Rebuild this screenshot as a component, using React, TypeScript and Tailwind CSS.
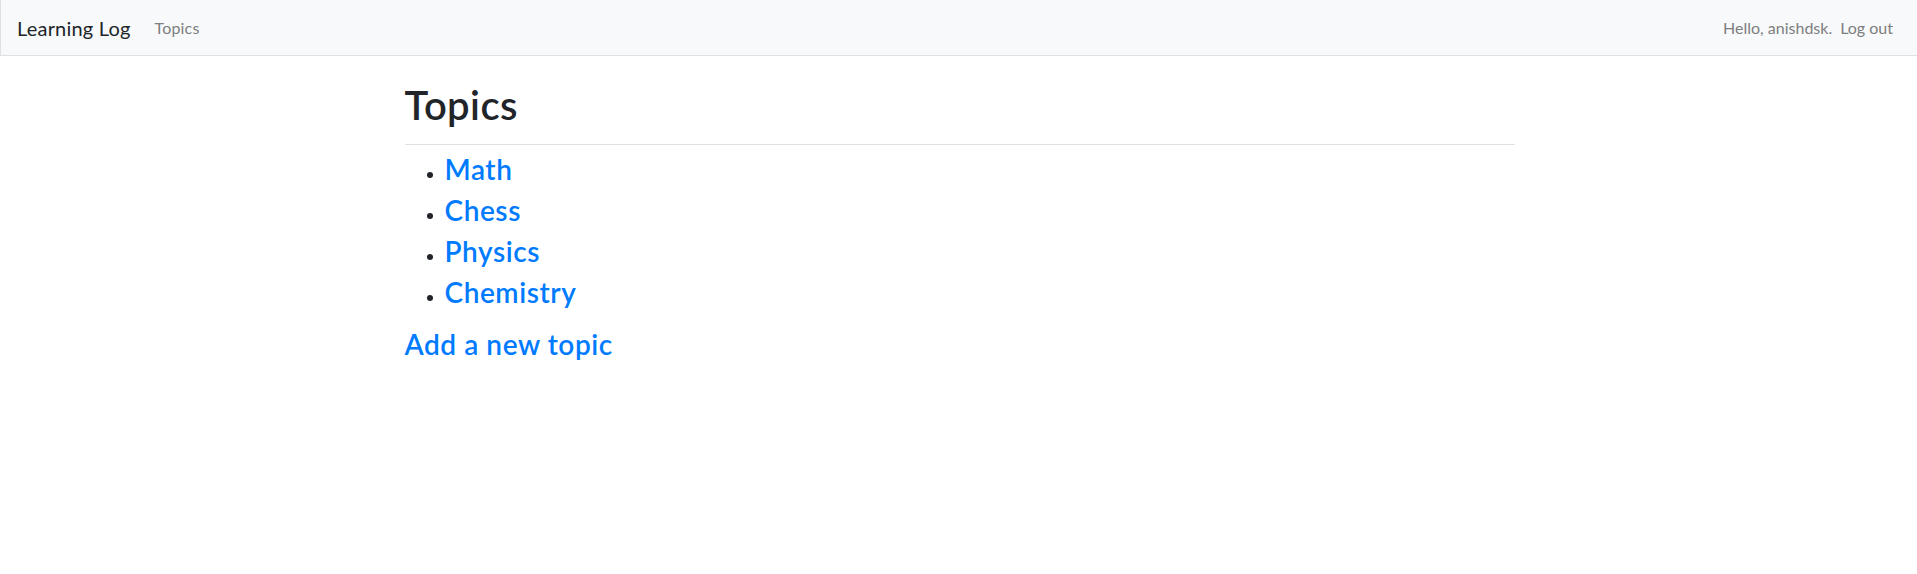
import * as React from 'react';

const topics = ['Math', 'Chess', 'Physics', 'Chemistry'];

const font = { fontFamily: 'Lato, "Noto Sans", sans-serif' };

export default function App() {
  return (
    <div className="min-h-screen bg-white text-[#212529]" style={font}>
      <nav className="flex h-[56px] items-center justify-between border-b border-l border-[#dee2e6] bg-[#f8f9fa] px-4">
        <div className="flex items-center">
          <a href="#" className="mr-4 text-[20px] leading-[30px] tracking-[0.01em] text-[#212529]">
            Learning Log
          </a>
          <a href="#" className="px-2 text-[16px] tracking-[0.01em] text-[#7d7e7f]">
            Topics
          </a>
        </div>
        <div className="flex items-center text-[16px] text-[#7d7e7f]">
          <span className="px-2">Hello, anishdsk.</span>
          <a href="#" className="pr-2">
            Log out
          </a>
        </div>
      </nav>

      <main className="mx-auto w-[1140px] pl-[16px] pr-[14px] pt-[25px]">
        <div className="border-b border-[#dee2e6] pb-[15px]">
          <h1 className="text-[40px] font-semibold leading-[48px] tracking-[0.01em]">Topics</h1>
        </div>
        <ul className="mt-[8px] mb-[19px] list-disc pl-[40px] marker:text-[17px] marker:text-[#212529]">
          {topics.map((t) => (
            <li key={t} className="mb-[8px]">
              <h3 className="text-[28px] font-semibold leading-[33px] tracking-[0.02em]">
                <a href="#" className="text-[#007bff]">
                  {t}
                </a>
              </h3>
            </li>
          ))}
        </ul>
        <h3 className="text-[28px] font-semibold leading-[33px] tracking-[0.02em]">
          <a href="#" className="text-[#007bff]">
            Add a new topic
          </a>
        </h3>
      </main>
    </div>
  );
}
